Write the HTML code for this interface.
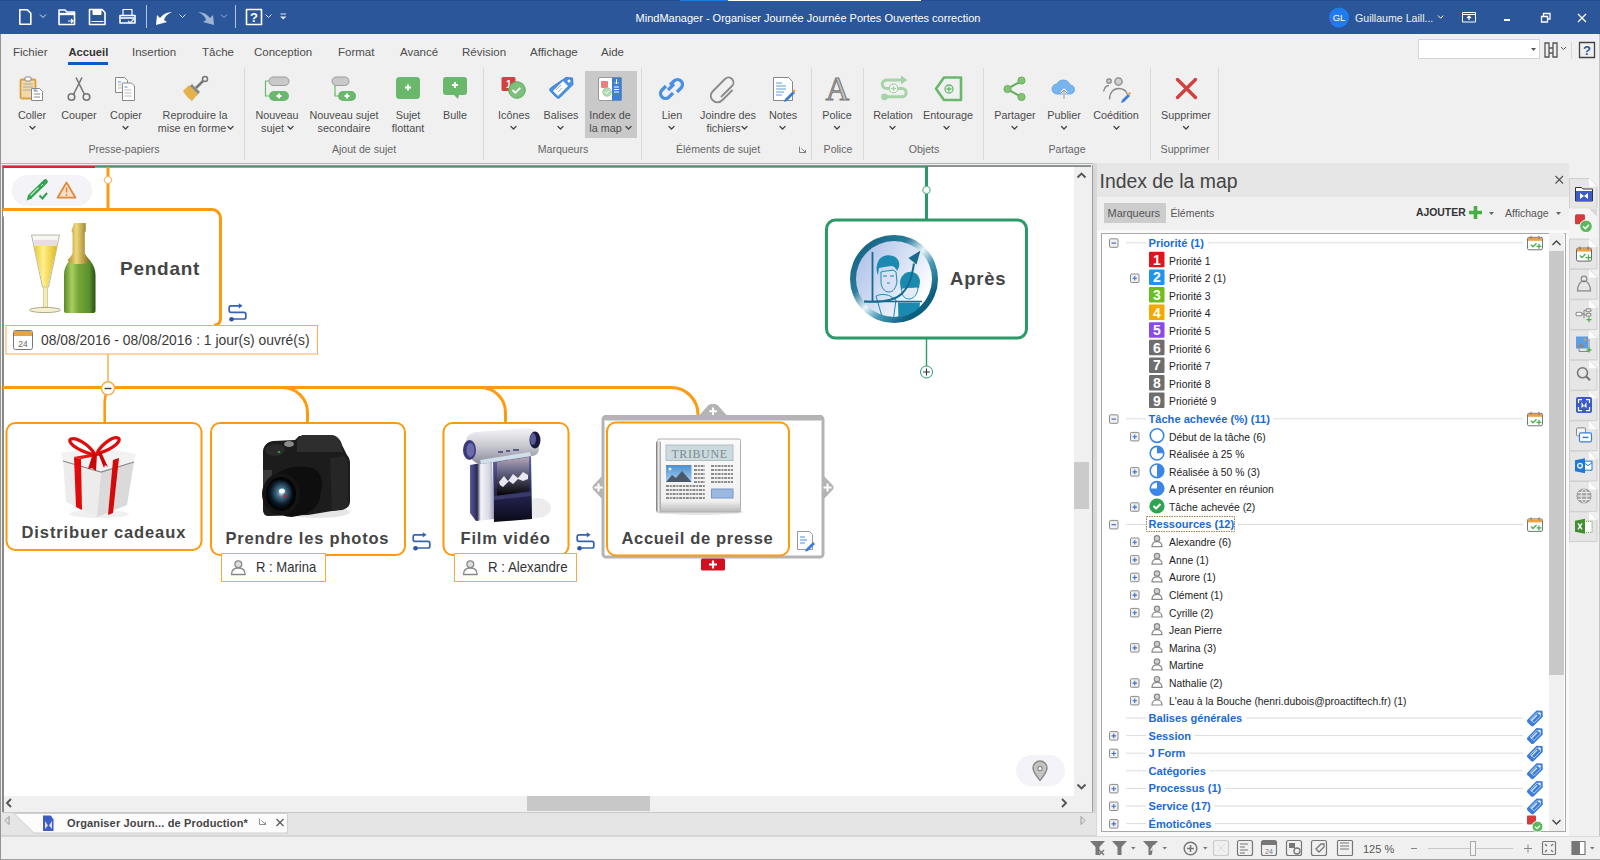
<!DOCTYPE html>
<html><head><meta charset="utf-8">
<style>
*{margin:0;padding:0;box-sizing:border-box}
html,body{width:1600px;height:860px;overflow:hidden;background:#f0f0f0;font-family:"Liberation Sans",sans-serif;position:relative}
.a{position:absolute}
svg{position:absolute;overflow:visible}
#title{left:0;top:0;width:1600px;height:34px;background:#2b579a}
#menu{left:0;top:34px;width:1600px;height:34px;background:#f0f0f0}
#ribbon{left:0;top:68px;width:1600px;height:95px;background:#f0f0f0}
.rl{position:absolute;font-size:10.8px;line-height:13.5px;color:#4c4c4c;text-align:center;white-space:nowrap}
.gl{position:absolute;font-size:10.6px;line-height:13px;color:#666;text-align:center;white-space:nowrap;top:143px}
.sep{position:absolute;top:68px;width:1px;height:92px;background:#dadada}
.mt{position:absolute;top:44.5px;font-size:11.5px;line-height:14px;color:#4c4c4c;white-space:nowrap}
#mapwrap{left:0;top:163px;width:1094px;height:650px;background:#a8a8a8}
#canvas{left:3px;top:167px;width:1071px;height:629px;background:#fff;overflow:hidden}
#vscroll{left:1074px;top:167px;width:18px;height:629px;background:#f0f0f0}
#hscroll{left:3px;top:796px;width:1089px;height:17px;background:#f0f0f0}
#tabbar{left:0;top:813px;width:1097px;height:23px;background:#e6e6e6}
#status{left:0;top:836px;width:1600px;height:24px;background:#f0f0f0}
#panel{left:1094px;top:163px;width:475px;height:673px;background:#f0f0f0}
#phead{left:1096px;top:163px;width:473px;height:34px;background:#e6e6e6}
#plist{left:1101px;top:232px;width:464px;height:599px;background:#fff;border:1px solid #a0a0a0}
#strip{left:1569px;top:163px;width:31px;height:673px;background:#f0f0f0}
</style></head><body>

<div id="title" class="a">
<div class="a" style="left:0;top:0;width:1600px;height:1px;background:#244c8a"></div><div class="a" style="left:680px;top:0;width:48px;height:1px;background:#1a7ae0"></div><div class="a" style="left:728px;top:0;width:193px;height:1px;background:#fff"></div>
<svg class="a" style="left:0;top:0" width="1600" height="34">
<g fill="none" stroke="#fff" stroke-width="1.6" stroke-linejoin="round">
 <path d="M19.8 9.8h7.5l3.5 3.5v11h-11z"/>
 <path d="M40 14.5l3 3 3-3" stroke-width="1" stroke="#dfe6f0"/>
 <path d="M59 10h6l2 2h7.5v12.5H59z"/>
 <path d="M59 14h15.5" stroke-width="2.4"/>
 <path d="M89.5 9.5h12.5l3 3v12h-15.5z"/>
 <path d="M93 10h8v4.5h-8z" fill="#fff" stroke-width="1"/>
 <path d="M91.5 21.5h12" stroke-width="1"/>
 <path d="M120 15.5h15v7.5h-15z"/>
 <path d="M123 9.5h9v6h-9z" stroke-width="1.2"/>
 <path d="M121 18h13" stroke-width="1.6"/>
 <path d="M179.5 14.5l3 3 3-3" stroke-width="1" stroke="#dfe6f0"/>
 <path d="M221 14.5l3 3 3-3" stroke-width="1" stroke="#9fb2cf"/>
 <path d="M246.5 9.5h15v15h-15z"/>
 <path d="M265.5 14.5l3 3 3-3" stroke-width="1" stroke="#dfe6f0"/>
</g>
<path d="M68 21h5M71 19l2 2-2 2M128 21l2 2 4-4" fill="none" stroke="#fff" stroke-width="1.2"/>
<path d="M146.5 5v23M235.5 5v23" stroke="#b7c5da" stroke-width="1"/>
<path d="M156 25l1-10 3 3c3-4 7-6 12-6-4 2-7 4-8 8l3 2z" fill="#fff"/>
<path d="M214 25l-1-10-3 3c-3-4-7-6-12-6 4 2 7 4 8 8l-3 2z" fill="#9fb4d4"/>
<text x="254" y="22" font-family="Liberation Sans" font-weight="bold" font-size="13" fill="#fff" text-anchor="middle">?</text>
<path d="M280.5 14h5.5" stroke="#dfe6f0" stroke-width="1"/><path d="M280 16.5h6.5l-3.25 3z" fill="#dfe6f0"/>
<circle cx="1339" cy="17.5" r="10" fill="#1f7cf0"/>
<text x="1339" y="21" font-family="Liberation Sans" font-size="9.5" fill="#fff" text-anchor="middle">GL</text>
<path d="M1438 15.5l2.7 2.7 2.7-2.7" stroke="#fff" stroke-width="1" fill="none"/>
<path d="M1462.5 12.5h13v9.5h-13zM1462.5 14.5h13" stroke="#fff" stroke-width="1" fill="none"/>
<path d="M1469 20v-4M1467 18l2-2 2 2" stroke="#fff" stroke-width="1.2" fill="none"/>
<rect x="1504" y="19" width="6" height="2" fill="#fff"/>
<path d="M1541.5 16.5h6v5.5h-6zM1543.5 16.5v-3h6.5v5.5h-2.5" stroke="#fff" stroke-width="1.3" fill="none"/>
<path d="M1578 14l8 8M1586 14l-8 8" stroke="#fff" stroke-width="1.3"/>
</svg>
<div class="a" style="left:0;top:9px;width:1600px;text-align:center;color:#fff;font-size:11px;line-height:18px;padding-left:16px">MindManager - Organiser Journée Journée Portes Ouvertes correction</div>
<div class="a" style="left:1355px;top:9px;color:#f0f0f0;font-size:10.6px;line-height:18px">Guillaume Laill...</div>
</div>

<div class="a" style="left:0;top:34px;width:1px;height:826px;background:#999"></div>
<div class="mt" style="left:13px">Fichier</div>
<div class="mt" style="left:68.5px;font-weight:bold;color:#333;font-size:11.2px">Accueil</div>
<div class="a" style="left:68px;top:62px;width:40px;height:3px;background:#0b5ac5"></div>
<div class="mt" style="left:132px">Insertion</div>
<div class="mt" style="left:202px">Tâche</div>
<div class="mt" style="left:254px">Conception</div>
<div class="mt" style="left:338px">Format</div>
<div class="mt" style="left:400px">Avancé</div>
<div class="mt" style="left:462px">Révision</div>
<div class="mt" style="left:530px">Affichage</div>
<div class="mt" style="left:601px">Aide</div>
<!-- search box -->
<div class="a" style="left:1418px;top:39px;width:122px;height:20px;background:#fff;border:1px solid #d4d4d4"></div>
<svg style="left:0;top:0" width="1600" height="163">
<path d="M1531 48h5l-2.5 3z" fill="#555"/>
<g fill="none" stroke="#555" stroke-width="1.3">
<path d="M1545 43h4v14h-4zM1553 43h4v14h-4zM1549 48h4v5h-4z"/>
<path d="M1561 47l2.5 2.5 2.5-2.5" stroke-width="1"/>
<path d="M1579.5 42.5h15v15h-15z" stroke="#444"/>
</g>
<path d="M1571.5 42v17" stroke="#d8d8d8"/>
<text x="1587" y="55" font-family="Liberation Sans" font-size="13" fill="#2b579a" text-anchor="middle" font-weight="bold">?</text>
</svg>
<!-- highlight Index de la map -->
<div class="a" style="left:585px;top:71px;width:52px;height:67px;background:#c9c9c9"></div>
<div class="sep" style="left:244px"></div>
<div class="sep" style="left:483px"></div>
<div class="sep" style="left:641px"></div>
<div class="sep" style="left:811px"></div>
<div class="sep" style="left:863px"></div>
<div class="sep" style="left:983px"></div>
<div class="sep" style="left:1150px"></div>
<div class="sep" style="left:1218px"></div>
<!-- labels -->
<div class="rl" style="left:2px;width:60px;top:108.5px">Coller</div>
<div class="rl" style="left:49px;width:60px;top:108.5px">Couper</div>
<div class="rl" style="left:96px;width:60px;top:108.5px">Copier</div>
<div class="rl" style="left:155px;width:80px;top:108.5px">Reproduire la<br>mise en forme&nbsp;&nbsp;</div>
<div class="rl" style="left:247px;width:60px;top:108.5px">Nouveau<br>sujet&nbsp;&nbsp;&nbsp;</div>
<div class="rl" style="left:304px;width:80px;top:108.5px">Nouveau sujet<br>secondaire</div>
<div class="rl" style="left:378px;width:60px;top:108.5px">Sujet<br>flottant</div>
<div class="rl" style="left:425px;width:60px;top:108.5px">Bulle</div>
<div class="rl" style="left:484px;width:60px;top:108.5px">Icônes</div>
<div class="rl" style="left:531px;width:60px;top:108.5px">Balises</div>
<div class="rl" style="left:580px;width:60px;top:108.5px">Index de<br>la map&nbsp;&nbsp;&nbsp;</div>
<div class="rl" style="left:642px;width:60px;top:108.5px">Lien</div>
<div class="rl" style="left:690px;width:76px;top:108.5px">Joindre des<br>fichiers&nbsp;&nbsp;&nbsp;</div>
<div class="rl" style="left:753px;width:60px;top:108.5px">Notes</div>
<div class="rl" style="left:807px;width:60px;top:108.5px">Police</div>
<div class="rl" style="left:863px;width:60px;top:108.5px">Relation</div>
<div class="rl" style="left:918px;width:60px;top:108.5px">Entourage</div>
<div class="rl" style="left:985px;width:60px;top:108.5px">Partager</div>
<div class="rl" style="left:1034px;width:60px;top:108.5px">Publier</div>
<div class="rl" style="left:1086px;width:60px;top:108.5px">Coédition</div>
<div class="rl" style="left:1156px;width:60px;top:108.5px">Supprimer</div>
<div class="gl" style="left:74px;width:100px">Presse-papiers</div>
<div class="gl" style="left:314px;width:100px">Ajout de sujet</div>
<div class="gl" style="left:513px;width:100px">Marqueurs</div>
<div class="gl" style="left:668px;width:100px">Éléments de sujet</div>
<div class="gl" style="left:808px;width:60px">Police</div>
<div class="gl" style="left:894px;width:60px">Objets</div>
<div class="gl" style="left:1037px;width:60px">Partage</div>
<div class="gl" style="left:1155px;width:60px">Supprimer</div>
<!-- icons -->
<svg style="left:0;top:0" width="1230" height="163">
<g fill="none" stroke="#444" stroke-width="1.25" stroke-linecap="round">
<path d="M30 126.5l2.5 2.5 2.5-2.5"/><path d="M123 126.5l2.5 2.5 2.5-2.5"/>
<path d="M228 126.5l2.5 2.5 2.5-2.5"/>
<path d="M288 126.5l2.5 2.5 2.5-2.5"/>
<path d="M511 126.5l2.5 2.5 2.5-2.5"/><path d="M558 126.5l2.5 2.5 2.5-2.5"/>
<path d="M626 126.5l2.5 2.5 2.5-2.5"/>
<path d="M669 126.5l2.5 2.5 2.5-2.5"/><path d="M742 126.5l2.5 2.5 2.5-2.5"/><path d="M780 126.5l2.5 2.5 2.5-2.5"/>
<path d="M834.5 126.5l2.5 2.5 2.5-2.5"/><path d="M890 126.5l2.5 2.5 2.5-2.5"/><path d="M944 126.5l2.5 2.5 2.5-2.5"/>
<path d="M1012 126.5l2.5 2.5 2.5-2.5"/><path d="M1061.5 126.5l2.5 2.5 2.5-2.5"/><path d="M1114 126.5l2.5 2.5 2.5-2.5"/>
<path d="M1183.5 126.5l2.5 2.5 2.5-2.5"/>
</g>
<!-- Coller -->
<rect x="20.5" y="79.5" width="15" height="19" rx="1.5" fill="#f2d9a6" stroke="#d9a041" stroke-width="1.8"/>
<rect x="25" y="77" width="6" height="4" rx="1" fill="#fff" stroke="#888"/>
<path d="M23 84h10M23 87h10M23 90h8" stroke="#aaa"/>
<path d="M31.5 88.5h8l3 3v9h-11z" fill="#fff" stroke="#888"/>
<path d="M34 91h4M34 94h6M34 97h6" stroke="#888"/>
<path d="M33.5 90h3" stroke="#4a8ee0"/>
<!-- Couper -->
<g fill="none" stroke="#777" stroke-width="1.6">
<circle cx="71.5" cy="97" r="3.3"/><circle cx="86.5" cy="97" r="3.3"/>
<path d="M73.5 94.5L82 77.5M84.5 94.5L76 77.5"/>
</g>
<!-- Copier -->
<path d="M115.5 77.5h9l3 3v12h-12z" fill="#fafafa" stroke="#888"/>
<path d="M122.5 83h9l3 3v14.5h-12z" fill="#fff" stroke="#888"/>
<path d="M118 82h3M124.5 87h3" stroke="#4a8ee0"/>
<path d="M118 85h5M118 88h5M124.5 90h7M124.5 93h7M124.5 96h7" stroke="#bbb"/>
<!-- brush -->
<path d="M196 88l7-7" stroke="#777" stroke-width="2.5"/>
<circle cx="205" cy="79" r="2.5" fill="none" stroke="#777" stroke-width="1.5"/>
<path d="M192 84l8 8-3 3-8-8z" fill="#888"/>
<path d="M183 91l6-6 9 9-6 7c-2-1-7-6-9-10z" fill="#e3b24a"/>
<!-- Nouveau sujet -->
<path d="M269 81h-3.5v15h3.5" fill="none" stroke="#6ab86b" stroke-width="1.2"/>
<rect x="269" y="77" width="20" height="8.5" rx="4.2" fill="#c9c9c9" stroke="#9c9c9c"/>
<rect x="269" y="91" width="20" height="10" rx="5" fill="#6ab86b"/>
<path d="M279 93.5v5M276.5 96h5" stroke="#fff" stroke-width="1.8"/>
<!-- Nouveau sujet secondaire -->
<path d="M335 85v11h3" fill="none" stroke="#6ab86b" stroke-width="1.2"/>
<rect x="332" y="77" width="17" height="8.5" rx="4.2" fill="#c9c9c9" stroke="#9c9c9c"/>
<rect x="338" y="91" width="18" height="10" rx="5" fill="#6ab86b"/>
<path d="M347 93.5v5M344.5 96h5" stroke="#fff" stroke-width="1.8"/>
<!-- Sujet flottant -->
<rect x="396" y="77" width="24" height="22" rx="3.5" fill="#6ab86b"/>
<path d="M408 84.5v6M405 87.5h6" stroke="#fff" stroke-width="2"/>
<!-- Bulle -->
<path d="M446 77h18a3 3 0 0 1 3 3v12a3 3 0 0 1-3 3h-5l-1 4-4-4h-8a3 3 0 0 1-3-3v-12a3 3 0 0 1 3-3z" fill="#6ab86b"/>
<path d="M455 82v6M452 85h6" stroke="#fff" stroke-width="2"/>
<!-- Icones -->
<rect x="501.5" y="77" width="14" height="14" rx="1.5" fill="#d44040"/>
<text x="506" y="88" font-family="Liberation Sans" font-weight="bold" font-size="10" fill="#fff">1</text>
<circle cx="517" cy="90" r="8.3" fill="#7cc07c" stroke="#5aaa5a" stroke-width="1"/>
<path d="M512.5 90l2.8 2.8 5-5" fill="none" stroke="#fff" stroke-width="1.8"/>
<!-- Balises -->
<path d="M566 77.5l6.5 0.5 0.5 6.5-13 13c-1 1-2.5 1-3.5 0l-6-6c-1-1-1-2.5 0-3.5z" fill="#4a90e2" stroke="#3b7dd8"/>
<path d="M553 91l10-10 5 5-10 10z" fill="#fff"/>
<circle cx="569" cy="81" r="1.5" fill="#fff"/>
<path d="M556 90l5-5M558 92l4-4" stroke="#999" stroke-width=".8"/>
<!-- Index de la map -->
<rect x="598.5" y="77.5" width="23" height="23" rx="1.5" fill="#fff" stroke="#999"/>
<rect x="612" y="77.5" width="9.5" height="23" fill="#3d7fd4"/>
<rect x="601" y="81" width="7" height="7" rx="1" fill="#e88080"/>
<circle cx="607" cy="92" r="4.3" fill="#b4dcb4" stroke="#9ccc9c" stroke-width=".8"/><path d="M605 92l1.5 1.5 2.5-2.5" fill="none" stroke="#fff" stroke-width="1"/>
<path d="M616.5 79v5M614.5 82l2 2 2-2M614 87h5M614 89.5h5M614 92h5" stroke="#fff" stroke-width="1"/>
<!-- Lien -->
<g fill="none" stroke="#4a90e2" stroke-width="3.2">
<path d="M670 85l4-4c2-2 5-2 7 0s2 5 0 7l-4 4"/>
<path d="M673 93l-4 4c-2 2-5 2-7 0s-2-5 0-7l4-4"/>
<path d="M668 90l6-6"/>
</g>
<!-- Joindre -->
<path d="M721 97l11-11c2-2 2-5 0-7s-5-2-7 0l-12 12c-3 3-3 7 0 9.5s6.5 2.5 9.5-.5l10-10" fill="none" stroke="#8a8a8a" stroke-width="1.8"/>
<!-- Notes -->
<path d="M773.5 77.5h15l4 4v19h-19z" fill="#fff" stroke="#888"/>
<path d="M776 83h6M776 86h10M776 89h10M776 92h8M776 95h6" stroke="#4a8ee0" stroke-width=".9"/>
<path d="M785 99l8-8 2 2-8 8-3 1z" fill="#3b7dd8"/>
<circle cx="794" cy="91" r="1.3" fill="#f0a030"/>
<!-- Police -->
<text x="837.5" y="100" font-family="Liberation Serif" font-size="33" fill="#c4c4c4" text-anchor="middle" stroke="#777" stroke-width="1">A</text>
<!-- Relation -->
<path d="M903 80H886.5a4.2 4.2 0 0 0 0 8.4H902a4.2 4.2 0 0 1 0 8.4H886" fill="none" stroke="#a6d4a6" stroke-width="3"/>
<path d="M901 75.5l6.5 4.5-6.5 4.5z" fill="#a6d4a6"/>
<circle cx="884.5" cy="96.8" r="3.4" fill="#a6d4a6"/>
<circle cx="893.5" cy="88.4" r="4.2" fill="#fff" stroke="#a6d4a6" stroke-width="1.3"/>
<path d="M893.5 85.8v5.2M890.9 88.4h5.2" stroke="#a6d4a6" stroke-width="1.5"/>
<!-- Entourage -->
<path d="M944 77.5h17v22.5h-17l-8-11.25z" fill="none" stroke="#6ab86b" stroke-width="2.6" stroke-linejoin="round"/>
<circle cx="949" cy="89" r="4" fill="none" stroke="#6ab86b" stroke-width="1.3"/>
<path d="M949 86.5v5M946.5 89h5" stroke="#6ab86b" stroke-width="1.3"/>
<!-- Partager -->
<path d="M1021.5 81l-14.5 8 14.5 8" fill="none" stroke="#62ac5a" stroke-width="2"/>
<g fill="#82c472" stroke="#6ab05e" stroke-width="1"><circle cx="1021.5" cy="80.5" r="3.6"/><circle cx="1007.5" cy="89" r="3.6"/><circle cx="1021.5" cy="97" r="3.6"/></g>
<!-- Publier -->
<path d="M1057 94a5 5 0 0 1 0-10 7 7 0 0 1 13 1 4.5 4.5 0 0 1 0 9z" fill="#78b4ec" stroke="#5a9ee0" stroke-width=".8"/>
<path d="M1064 99v-9M1061 93l3-3 3 3" fill="none" stroke="#fff" stroke-width="2.4"/>
<path d="M1064 99v-9M1061 93l3-3 3 3" fill="none" stroke="#888" stroke-width="1"/>
<!-- Coedition -->
<g fill="none" stroke="#888" stroke-width="1.3">
<circle cx="1118.5" cy="81.5" r="3.6" fill="#d0d0d0"/><path d="M1109.5 99.5c0-7 4-11 9-11s8 3 9 6"/>
<circle cx="1109" cy="81" r="2.2" fill="#d0d0d0"/><path d="M1103.5 91.5c1-4 3-6 5.5-6"/>
</g>
<path d="M1122 100l6-6 2 2-6 6-3 1z" fill="#3b7dd8"/><circle cx="1129.5" cy="93.5" r="1.2" fill="#f0a030"/>
<!-- Supprimer -->
<path d="M1177.5 79.5l18 18M1195.5 79.5l-18 18" stroke="#d24040" stroke-width="3.4" stroke-linecap="round"/>
<!-- dialog launcher -->
<path d="M799.5 146.5v6h6M801.5 148.5l4 4M803 152.5h2.5v-2.5" fill="none" stroke="#777" stroke-width=".9"/>
</svg>

<div class="a" style="left:0;top:163px;width:1094px;height:650px;background:#f0f0f0"></div>
<div class="a" style="left:0;top:163px;width:1094px;height:1px;background:#b4b4b4"></div>
<div class="a" style="left:2px;top:165px;width:1090px;height:1px;background:#8e9a9a"></div>
<div class="a" style="left:2px;top:165px;width:1.5px;height:647px;background:#8a8a8a"></div>
<div class="a" style="left:1090.5px;top:165px;width:1px;height:648px;background:#f4f4f4"></div><div class="a" style="left:1091.5px;top:165px;width:1.2px;height:648px;background:#9a9a9a"></div><div class="a" style="left:2px;top:812px;width:1091px;height:1px;background:#c8c8c8"></div>
<div class="a" style="left:3px;top:165.5px;width:1088px;height:1.8px;background:#8c8c8c"></div>
<div class="a" style="left:3.5px;top:167.3px;width:1070px;height:628.7px;background:#fff"></div>
<svg style="left:3px;top:166px;overflow:hidden" width="1071" height="630" viewBox="3 166 1071 630">
<defs>
 <linearGradient id="glass" x1="0" x2="1"><stop offset="0" stop-color="#e8c838"/><stop offset=".4" stop-color="#fff08a"/><stop offset="1" stop-color="#e0b820"/></linearGradient>
 <linearGradient id="bottle" x1="0" x2="1"><stop offset="0" stop-color="#5a8a28"/><stop offset=".25" stop-color="#a8d060"/><stop offset=".45" stop-color="#78a838"/><stop offset=".8" stop-color="#5a9030"/><stop offset="1" stop-color="#2a5010"/></linearGradient>
 <linearGradient id="foil" x1="0" x2="1"><stop offset="0" stop-color="#a88a30"/><stop offset=".4" stop-color="#f0d878"/><stop offset="1" stop-color="#8a6a20"/></linearGradient>
 <radialGradient id="lens" cx=".55" cy=".45" r=".6"><stop offset="0" stop-color="#d8e8f0"/><stop offset=".25" stop-color="#4a7890"/><stop offset=".7" stop-color="#0a1a28"/><stop offset="1" stop-color="#000"/></radialGradient>
 <linearGradient id="cam" x1="0" x2="1" y1="0" y2="1"><stop offset="0" stop-color="#3a3a3a"/><stop offset="1" stop-color="#0a0a0a"/></linearGradient>
 <linearGradient id="silver" x1="0" x2="0" y1="0" y2="1"><stop offset="0" stop-color="#f4f4f8"/><stop offset=".5" stop-color="#c8c8d0"/><stop offset="1" stop-color="#8a8a9a"/></linearGradient>
 <linearGradient id="paper" x1="0" x2="0" y1="0" y2="1"><stop offset="0" stop-color="#fafafa"/><stop offset=".85" stop-color="#f0f0f0"/><stop offset="1" stop-color="#b8b8b8"/></linearGradient>
 <linearGradient id="apres" x1="0" x2="1" y1="0" y2=".6"><stop offset="0" stop-color="#a8bce6"/><stop offset=".55" stop-color="#d4dff4"/><stop offset="1" stop-color="#ffffff"/></linearGradient>
 <linearGradient id="ring" x1="0" x2="1" y1="0" y2="1"><stop offset="0" stop-color="#0a5878"/><stop offset=".35" stop-color="#2a7a9a"/><stop offset=".5" stop-color="#e8f4f8"/><stop offset=".62" stop-color="#4a9ab8"/><stop offset=".8" stop-color="#0e6080"/><stop offset="1" stop-color="#0a5070"/></linearGradient>
</defs>
<!-- top lines -->
<rect x="3" y="166" width="92" height="2" fill="#e0262a"/>
<rect x="95" y="166.2" width="831" height="1.6" fill="#2b9a66" opacity=".85"/>
<!-- badge -->
<rect x="12" y="175" width="80" height="31" rx="15.5" fill="#f3f3f8"/>
<path d="M30 196.5L45.5 181.5" stroke="#2ea44f" stroke-width="4.6" stroke-linecap="round"/>
<path d="M26.5 200.5l2-5.5 3.5 3.5z" fill="#2ea44f"/>
<path d="M30.5 195.5l8-8" stroke="#c8ecc8" stroke-width="1.1"/>
<path d="M41 186l2-2" stroke="#c8ecc8" stroke-width="1"/>
<path d="M39.5 195.5l3 3 4.5-5.5" fill="none" stroke="#2ea44f" stroke-width="2"/>
<path d="M66.5 182.5l9 15.2h-18z" fill="#f8e0c8" stroke="#e08a3c" stroke-width="1.8" stroke-linejoin="round"/>
<path d="M66.5 187.5v5" stroke="#e08a3c" stroke-width="1.6"/><circle cx="66.5" cy="195" r=".9" fill="#e08a3c"/>
<!-- Pendant connector -->
<rect x="106.5" y="167" width="3" height="42" fill="#fd9a0e"/>
<circle cx="108" cy="180" r="3.6" fill="#fff" stroke="#fdbb6a" stroke-width="1.3"/>
<!-- Pendant box -->
<path d="M-10 209.5H212a8.5 8.5 0 0 1 8.5 8.5V319a6.5 6.5 0 0 1-6.5 6.5" fill="#fff" stroke="#fd9a0e" stroke-width="3"/>
<!-- champagne glass -->
<path d="M31.5 235h28l-11 52h-6z" fill="#f6f6f2" stroke="#b8b8a8" stroke-width="1"/>
<path d="M34 246h23l-9.5 42h-4z" fill="url(#glass)"/>
<path d="M33.5 240h24l-1 6h-22z" fill="#e8e0d8"/>
<rect x="43.5" y="287" width="4" height="21" fill="#f4ecb0" stroke="#c8c090" stroke-width=".7"/>
<ellipse cx="45" cy="310" rx="15.5" ry="2.6" fill="#f4f0d0" stroke="#a8a080" stroke-width=".9"/>
<!-- bottle -->
<path d="M74 223h11.5v8l-1 2v20c2 5 11 10 11 22v36c0 1-1 2-2 2H66c-1 0-2-1-2-2v-36c0-12 9-17 11-22v-20l-1-2z" fill="url(#bottle)"/>
<path d="M74 223h11.5v8l-1 2v20c1 3 3 5 5 7l-3 3c-2 1-4 1-8 1s-6 0-8-1l-3-3c2-2 4-4 5-7v-20l-1-2z" fill="url(#foil)"/>
<!-- Pendant text -->
<text x="120" y="274.6" font-family="Liberation Sans" font-weight="bold" font-size="19" letter-spacing=".75" fill="#454545">Pendant</text>
<g transform="translate(0,0)"><path d="M240 305.8H231q-1.8 0-1.8 1.8v3q0 1.8 1.8 1.8h13q1.8 0 1.8 1.8v3q0 1.8-1.8 1.8H232" fill="none" stroke="#3462b4" stroke-width="1.7"/><path d="M238.8 303.2l3.8 2.6-3.8 2.6z" fill="#3462b4"/><circle cx="231.5" cy="319.2" r="2.3" fill="#2a56a8"/></g>
<!-- date callout -->
<rect x="6" y="325.5" width="311.5" height="28.5" fill="#fff" stroke="#f9ac50" stroke-width="1"/>
<rect x="13.5" y="330.5" width="19" height="19" rx="2" fill="#fff" stroke="#777" stroke-width="1"/>
<rect x="14" y="331" width="18" height="5" fill="#f0a040"/>
<text x="23" y="347" font-family="Liberation Sans" font-size="8.5" fill="#666" text-anchor="middle">24</text>
<text transform="translate(41,345.4) scale(.958,1)" font-family="Liberation Sans" font-size="14.5" fill="#3a3a3a">08/08/2016 - 08/08/2016 : 1 jour(s) ouvré(s)</text>
<!-- connectors -->
<rect x="107.2" y="354" width="1.6" height="30" fill="#fdb45a"/>
<path d="M3 387.5H282.5a25 25 0 0 1 25 25v10" fill="none" stroke="#fd9a0e" stroke-width="3"/>
<path d="M282 387.5H480.5a25 25 0 0 1 25 25v10" fill="none" stroke="#fd9a0e" stroke-width="3"/>
<path d="M480 387.5H671a27 27 0 0 1 27 27v1" fill="none" stroke="#fd9a0e" stroke-width="3"/>
<path d="M107 392c-1.5 3-2.3 6-2.3 10v21" fill="none" stroke="#fd9a0e" stroke-width="2.6"/>
<circle cx="108" cy="388.3" r="6.6" fill="#fff" stroke="#f9a846" stroke-width="1.4"/>
<path d="M104.5 388.5h7" stroke="#444" stroke-width="1.4"/>
<!-- Distribuer box -->
<rect x="6.5" y="423" width="195" height="127" rx="9" fill="#fff" stroke="#fd9a0e" stroke-width="2"/>
<!-- gift -->
<ellipse cx="99" cy="514" rx="30" ry="4" fill="#f0f0f0"/>
<path d="M61 453l38-6 37 7-2 8-34 11-37-11z" fill="#f2f2f2"/>
<path d="M63 461l38 11-4 45-31-15z" fill="#ececec"/>
<path d="M101 472l33-10-7 43-30 12z" fill="#dadada"/>
<path d="M63 461l38 11 33-10" fill="none" stroke="#8a8a8a" stroke-width="1.3"/>
<path d="M74 457l7 2 1 51-6-3z" fill="#e00c0c"/>
<path d="M113 460l6-2-6 55-5 2z" fill="#d40a0a"/>
<path d="M74 457l22-4 6 2-21 4z" fill="#e81818"/>
<path d="M94 453c-6-9-18-16-23-14-4 2 2 10 23 16z" fill="#fff" stroke="#e00c0c" stroke-width="3.2" stroke-linejoin="round"/>
<path d="M97 453c5-9 16-17 21-15 4 2-2 10-21 16z" fill="#fff" stroke="#e00c0c" stroke-width="3.2" stroke-linejoin="round"/>
<path d="M93 453l-5 16 4-1 4 3 1-17zM98 453l6 15 1-3 3 2-7-15z" fill="#c80808"/>
<!-- Distribuer text -->
<text x="21.5" y="538.4" font-family="Liberation Sans" font-weight="bold" font-size="16.5" letter-spacing=".9" fill="#454545">Distribuer cadeaux</text>
<!-- Prendre box -->
<rect x="211" y="423" width="194" height="132" rx="9" fill="#fff" stroke="#fd9a0e" stroke-width="2"/>
<!-- camera -->
<ellipse cx="318" cy="512" rx="32" ry="6" fill="#e6e6e6"/>
<path d="M263 452c0-6 4-10 10-11l22-1 4-4h34c4 0 8 4 9 9l5 10c2 2 3 5 3 8v38c0 4-2 7-6 8l-36 6-40 1c-3 0-5-3-5-6z" fill="#1c1c1c"/>
<path d="M297 440l5-5h30c4 0 8 4 9 9l2 8h-46z" fill="#2e2e2e"/>
<path d="M263 470h9v30h-9z" fill="#3a3a3a"/>
<path d="M330 458l14-2c2 2 4 5 4 8v38c0 4-2 7-6 8l-10 1z" fill="#262626"/>
<ellipse cx="275" cy="450" rx="10" ry="6" fill="#2a2a2a"/>
<circle cx="279" cy="452" r="1.3" fill="#3a8a3a"/>
<ellipse cx="289" cy="444" rx="5" ry="3" fill="#8a8a8a"/>
<path d="M272 478c8-10 26-14 40-10 6 2 10 8 10 16l-2 14c-2 8-8 14-18 17l-10 2c-12 0-20-8-20-22z" fill="#0e0e0e"/>
<ellipse cx="281" cy="494" rx="19" ry="21" fill="#141414"/>
<ellipse cx="281" cy="494" rx="15" ry="17" fill="#050505"/>
<ellipse cx="280" cy="494" rx="12.5" ry="14" fill="url(#lens)"/>
<ellipse cx="282" cy="491" rx="3" ry="2.5" fill="#fff" opacity=".9"/>
<circle cx="285" cy="496" r="1.6" fill="#c02020"/>
<text x="225.5" y="543.8" font-family="Liberation Sans" font-weight="bold" font-size="16.5" letter-spacing=".8" fill="#454545">Prendre les photos</text>
<g transform="translate(184,229)"><path d="M240 305.8H231q-1.8 0-1.8 1.8v3q0 1.8 1.8 1.8h13q1.8 0 1.8 1.8v3q0 1.8-1.8 1.8H232" fill="none" stroke="#3462b4" stroke-width="1.7"/><path d="M238.8 303.2l3.8 2.6-3.8 2.6z" fill="#3462b4"/><circle cx="231.5" cy="319.2" r="2.3" fill="#2a56a8"/></g>
<!-- Marina callout -->
<rect x="221.5" y="553.5" width="104" height="28" fill="#fff" stroke="#f9a846" stroke-width="1"/>
<g fill="#ddd" stroke="#888" stroke-width="1.3"><circle cx="238.3" cy="564.3" r="3.4"/><path d="M231.5 574.5c0-4.5 3-6.5 6.8-6.5s6.8 2 6.8 6.5z" fill="none"/></g>
<text transform="translate(256,571.8) scale(.92,1)" font-family="Liberation Sans" font-size="14.2" fill="#333">R : Marina</text>
<!-- Film video box -->
<rect x="443.5" y="423" width="125" height="132" rx="9" fill="#fff" stroke="#fd9a0e" stroke-width="2"/>
<!-- video camera -->
<defs>
<linearGradient id="vbody" x1="0" x2="0" y1="0" y2="1"><stop offset="0" stop-color="#6a6aa8"/><stop offset=".5" stop-color="#2a2a5a"/><stop offset="1" stop-color="#0a0a1a"/></linearGradient>
<linearGradient id="vgrip" x1="0" x2="1"><stop offset="0" stop-color="#5a5aa0"/><stop offset=".3" stop-color="#2a2a50"/><stop offset=".45" stop-color="#f4f4f8"/><stop offset=".8" stop-color="#d8d8e4"/><stop offset="1" stop-color="#9a9ab8"/></linearGradient>
<linearGradient id="vscr" x1="0" x2="0" y1="0" y2="1"><stop offset="0" stop-color="#b8a8b8"/><stop offset=".35" stop-color="#6a6a8a"/><stop offset="1" stop-color="#000"/></linearGradient>
</defs>
<ellipse cx="537" cy="508" rx="14" ry="10" fill="#ececec"/>
<path d="M470 465l22-4 2 58-18 2-6-8z" fill="url(#vgrip)"/>
<path d="M493 461l38-6 1 64-38 3z" fill="url(#vbody)"/>
<path d="M497 462l32-5 0 34-32 5z" fill="url(#vscr)"/>
<path d="M499 482l5-6 4 5 5-7 5 4 5-6 5 3v4l-5 2-5-2-5 5-4-3-6 6-3-2z" fill="#e8e8f0"/>
<path d="M494 496l37-4v4l-37 4z" fill="#3a3a6a"/>
<path d="M466 444c0-8 3-11 10-12l52-4c6 0 9 3 10 9l1 12c0 4-3 7-7 7l-50 8c-7 1-16-8-16-20z" fill="url(#silver)"/>
<path d="M480 460l50-8 1 4-50 8z" fill="#cfe0ea"/>
<path d="M498 452h5M506 451h4M513 450h6" stroke="#5a5a8a" stroke-width="1.8"/>
<ellipse cx="469.5" cy="450" rx="6.5" ry="10" fill="#3a3a7a"/>
<ellipse cx="470.5" cy="450" rx="4" ry="7" fill="#6a6aaa"/>
<ellipse cx="535" cy="440" rx="5.5" ry="8.5" fill="#1a1a3a"/>
<ellipse cx="533" cy="439" rx="3" ry="6" fill="#5a5a9a"/>
<text x="460.5" y="543.8" font-family="Liberation Sans" font-weight="bold" font-size="16.5" letter-spacing=".85" fill="#454545">Film vidéo</text>
<g transform="translate(348,229)"><path d="M240 305.8H231q-1.8 0-1.8 1.8v3q0 1.8 1.8 1.8h13q1.8 0 1.8 1.8v3q0 1.8-1.8 1.8H232" fill="none" stroke="#3462b4" stroke-width="1.7"/><path d="M238.8 303.2l3.8 2.6-3.8 2.6z" fill="#3462b4"/><circle cx="231.5" cy="319.2" r="2.3" fill="#2a56a8"/></g>
<!-- Alexandre callout -->
<rect x="454.5" y="553.5" width="122" height="28" fill="#fff" stroke="#f9a846" stroke-width="1"/>
<g fill="#ddd" stroke="#888" stroke-width="1.3"><circle cx="470.3" cy="564.3" r="3.4"/><path d="M463.5 574.5c0-4.5 3-6.5 6.8-6.5s6.8 2 6.8 6.5z" fill="none"/></g>
<text transform="translate(488,571.8) scale(.935,1)" font-family="Liberation Sans" font-size="14.2" fill="#333">R : Alexandre</text>
<!-- selection frame -->
<path d="M606 416.5h214a3 3 0 0 1 3 3v134.5a3 3 0 0 1-3 3h-214a3 3 0 0 1-3-3v-134.5a3 3 0 0 1 3-3z" fill="none" stroke="#b4b4b4" stroke-width="3"/>
<rect x="603" y="415" width="220" height="5.5" rx="3" fill="#b4b4b4"/>
<path d="M699 415.5l9.5-10.5c1.5-1.5 7.5-1.5 9 0l9.5 10.5z" fill="#b4b4b4"/>
<path d="M713 407.5v7.5M709.2 411.2h7.6" stroke="#fff" stroke-width="2"/>
<path d="M604 474l-10.5 11c-1.5 1.5-1.5 3.5 0 5l10.5 11z" fill="#b4b4b4"/><path d="M594.5 487.5h8M598.5 483.5v8" stroke="#fff" stroke-width="2"/>
<path d="M822 474l10.5 11c1.5 1.5 1.5 3.5 0 5l-10.5 11z" fill="#b4b4b4"/><path d="M823.5 487.5h8M827.5 483.5v8" stroke="#fff" stroke-width="2"/>
<rect x="701" y="558.5" width="24" height="12" rx="1.5" fill="#d0101e"/>
<path d="M713 560.5v8M709 564.5h8" stroke="#fff" stroke-width="2.2"/>
<!-- Accueil box -->
<rect x="607" y="422.5" width="182" height="133" rx="9" fill="#fff" stroke="#fd9a0e" stroke-width="2"/>
<!-- newspaper -->
<defs><linearGradient id="roll" x1="0" x2="1"><stop offset="0" stop-color="#707070"/><stop offset=".5" stop-color="#e8e8e8"/><stop offset="1" stop-color="#a0a0a0"/></linearGradient>
<linearGradient id="sky" x1="0" x2="0" y1="0" y2="1"><stop offset="0" stop-color="#4a90d0"/><stop offset="1" stop-color="#a8d0f0"/></linearGradient></defs>
<ellipse cx="699" cy="512" rx="44" ry="3" fill="#e4e4e4"/>
<rect x="657.5" y="439" width="83" height="73" rx="1.5" fill="url(#paper)" stroke="#b0b0b0" stroke-width="1"/>
<rect x="656" y="441" width="5" height="71" rx="2" fill="url(#roll)"/>
<rect x="666" y="445" width="67" height="15.5" fill="#ccdade" stroke="#b0c0c4" stroke-width="1"/>
<text x="699.5" y="457.5" font-family="Liberation Serif" font-size="12" fill="#7a8a90" text-anchor="middle" letter-spacing=".6">TRIBUNE</text>
<rect x="666" y="465" width="25.5" height="17" fill="url(#sky)"/>
<path d="M666 482l6-7 4 3 6-7 9.5 11z" fill="#4a5a6a"/>
<circle cx="670" cy="469" r="1.5" fill="#e8f4ff"/>
<g stroke="#6a6a6a" stroke-width="1.3" stroke-dasharray="3 .8 2 .8">
<path d="M694 466h11M694 470h11M694 474h11M694 478h11M694 482h11M711 466h22M711 470h22M711 474h22M711 478h22M711 482h22M666 486h39M666 490h39M666 494h39M666 498h39"/>
</g>
<rect x="711.5" y="489" width="21.5" height="9" fill="#9ab8e0" stroke="#7a98c8" stroke-width="1"/>
<text x="621.5" y="543.6" font-family="Liberation Sans" font-weight="bold" font-size="16.5" letter-spacing=".68" fill="#454545">Accueil de presse</text>
<!-- notes icon -->
<path d="M797.5 531.5h12l3 3v15h-15z" fill="#fff" stroke="#999" stroke-width="1"/>
<path d="M800 537h5M800 540h7M800 543h5" stroke="#4a8ee0" stroke-width="1"/>
<path d="M806 549l7-7 2 2-7 7-3 .5z" fill="#3b7dd8"/>
<!-- Apres -->
<rect x="925" y="166" width="3" height="53" fill="#2b9a66"/>
<circle cx="926.5" cy="190" r="3.6" fill="#fff" stroke="#6cbb94" stroke-width="1.3"/>
<rect x="826.5" y="220" width="200" height="118" rx="9" fill="#fff" stroke="#2b9a66" stroke-width="3"/>
<circle cx="894" cy="279" r="44" fill="url(#ring)"/>
<circle cx="894" cy="279" r="38" fill="url(#apres)"/>
<clipPath id="apclip"><circle cx="894" cy="279" r="38.5"/></clipPath>
<g clip-path="url(#apclip)"><g fill="#1a8ab0">
<path d="M878 262c2-6 9-8 15-6 5 2 7 6 6 11l-2 4c-1-3-3-5-6-5-4 1-9 1-12 2l-1 7c-2-4-2-9 0-13z"/>
<path d="M881 272c3-1 8-1 12-2l3 2 1 10c-1 6-4 10-8 10-5 0-8-5-8-11z" fill="#d8e2f4" stroke="#1a8ab0" stroke-width="1"/>
<path d="M883 276h4M890 276h4M887 283h3" stroke="#1a8ab0" stroke-width="1.2"/>
<path d="M900 283c0-7 6-12 12-11 5 1 8 5 8 10l-1 6-18 2z"/>
<path d="M902 288l16-1c0 5-3 12-9 12s-8-6-7-11z" fill="#e4eaf8" stroke="#1a8ab0" stroke-width=".9"/>
<path d="M898 302.5h22l-1.5 15c-6 4-13 5-20 3z"/>
<path d="M876 296c4-2 10-2 14 0l6 4-3 22-10-2z" fill="none" stroke="#1a8ab0" stroke-width="1"/>
</g>
<path d="M872.5 252v49" stroke="#1a6a8e" stroke-width="1.8"/>
<path d="M864 301.5c16 1 30 0 38-8s10-18 12-30" fill="none" stroke="#1a6a8e" stroke-width="2"/>
<path d="M864 301.5h58" stroke="#1a6a8e" stroke-width="1.6"/>
<path d="M920.5 250.5l-12 7.5 8 6.5z" fill="#1a6a8e"/></g>
<text x="950" y="284.5" font-family="Liberation Sans" font-weight="bold" font-size="18.5" letter-spacing=".8" fill="#454545">Après</text>
<rect x="925.8" y="339" width="1.4" height="27" fill="#2b9a66"/>
<circle cx="926.5" cy="372" r="6" fill="#fff" stroke="#2b9a66" stroke-width="1"/>
<path d="M923 372h7M926.5 368.5v7" stroke="#333" stroke-width="1.1"/>
<!-- location pin pill -->
<rect x="1016" y="755" width="49" height="31" rx="15.5" fill="#f3f3f8"/>
<path d="M1040 780.5c-4-5-7-8.5-7-12.5a7 7 0 0 1 14 0c0 4-3 7.5-7 12.5z" fill="#c4c4c4" stroke="#888" stroke-width="1.4"/>
<circle cx="1040" cy="768.5" r="2.2" fill="#fff" stroke="#888" stroke-width="1.2"/>
</svg>
<!-- vertical scrollbar -->
<div class="a" style="left:1073.5px;top:168px;width:17px;height:628px;background:#f0f0f0"></div>
<div class="a" style="left:1073.5px;top:462px;width:15.5px;height:47px;background:#cbcbcb"></div>
<svg style="left:0;top:0" width="1600" height="860">
<path d="M1077.5 177.5l4-4 4 4M1077.5 784.5l4 4 4-4M11 799l-4 4 4 4M1062 799l4 4-4 4" fill="none" stroke="#555" stroke-width="1.9"/>
</svg>
<div class="a" style="left:527px;top:796px;width:123px;height:15px;background:#c8c8c8"></div>

<div class="a" style="left:1093px;top:163px;width:4px;height:673px;background:#d8d8d8"></div>
<div class="a" style="left:1097px;top:163px;width:472px;height:33.5px;background:#e6e6e6"></div>
<div class="a" style="left:1097px;top:196.5px;width:472px;height:33px;background:#f0f0f0"></div>
<div class="a" style="left:1097px;top:229.5px;width:472px;height:606.5px;background:#f9f9f9"></div>
<svg style="left:0;top:0" width="1600" height="200"><text transform="translate(1099.5,188) scale(.96,1)" font-family="Liberation Sans" font-size="20.2" fill="#444">Index de la map</text></svg>
<div class="a" style="left:1104px;top:203px;width:61.5px;height:19.5px;background:#cccccc"></div>
<div class="a" style="left:1107.5px;top:205.5px;font-size:11px;line-height:14px;color:#555">Marqueurs</div>
<div class="a" style="left:1170.5px;top:205.5px;font-size:10.5px;line-height:14px;color:#555">Éléments</div>
<div class="a" style="left:1416px;top:205.5px;font-size:10.4px;line-height:14px;color:#333;font-weight:bold">AJOUTER</div>
<div class="a" style="left:1505px;top:205.5px;font-size:10.5px;line-height:14px;color:#555">Affichage</div>
<svg style="left:0;top:0" width="1600" height="860">
<path d="M1555.5 176l7.5 7.5M1563 176l-7.5 7.5" stroke="#555" stroke-width="1.2"/>
<path d="M1475.5 206v13M1469 212.5h13" stroke="#44b044" stroke-width="3.6"/>
<path d="M1489 212h5l-2.5 3z M1556 212h5l-2.5 3z" fill="#666"/>
</svg>
<div class="a" style="left:1101px;top:233px;width:465px;height:599px;background:#fff;border:1px solid #a8a8a8"></div>
<div class="a" style="left:1549px;top:233px;width:15px;height:598px;background:#f0f0f0"></div>
<div class="a" style="left:1549px;top:251px;width:15px;height:424px;background:#c8c8c8"></div>
<svg style="left:0;top:0" width="1600" height="860">
<path d="M1552.5 245l4-4 4 4M1552.5 820l4 4 4-4" fill="none" stroke="#444" stroke-width="1.4"/>
<rect x="1109.5" y="238.8" width="8.5" height="8.5" rx="1" fill="#f0f0f0" stroke="#8a8a8a" stroke-width="1"/>
<path d="M1111.5 243.1h4.5" stroke="#3b6fc8" stroke-width="1.2"/>
<path d="M1126 242.8H1146M1207.5 242.8H1523" stroke="#dcdcdc" stroke-width="1"/>
<g transform="translate(1527,234.8)"><rect x=".5" y="2.5" width="15" height="12.5" rx="1.5" fill="#fff" stroke="#777"/><rect x="1" y="3" width="14" height="3" fill="#f0a040"/><path d="M4 1v3M12 1v3" stroke="#777"/><path d="M4 10l2 2 3.5-3.5" fill="none" stroke="#4caf50" stroke-width="1.4"/><path d="M12 9v5M9.5 11.5h5" stroke="#4caf50" stroke-width="1.3"/></g>
<rect x="1149" y="251.8" width="15.5" height="15.5" rx="1" fill="#e0141e"/>
<text x="1156.8" y="264.8" font-weight="bold" font-size="14" fill="#fff" text-anchor="middle">1</text>
<rect x="1130.5" y="274.0" width="8.5" height="8.5" rx="1" fill="#f0f0f0" stroke="#8a8a8a" stroke-width="1"/>
<path d="M1132.5 278.3h4.5M1134.75 276.0v4.6" stroke="#3b6fc8" stroke-width="1.1"/>
<rect x="1149" y="269.4" width="15.5" height="15.5" rx="1" fill="#1e96f0"/>
<text x="1156.8" y="282.4" font-weight="bold" font-size="14" fill="#fff" text-anchor="middle">2</text>
<rect x="1149" y="287.0" width="15.5" height="15.5" rx="1" fill="#6cbe1e"/>
<text x="1156.8" y="300.0" font-weight="bold" font-size="14" fill="#fff" text-anchor="middle">3</text>
<rect x="1149" y="304.6" width="15.5" height="15.5" rx="1" fill="#f5a800"/>
<text x="1156.8" y="317.6" font-weight="bold" font-size="14" fill="#fff" text-anchor="middle">4</text>
<rect x="1149" y="322.2" width="15.5" height="15.5" rx="1" fill="#8a4ae8"/>
<text x="1156.8" y="335.2" font-weight="bold" font-size="14" fill="#fff" text-anchor="middle">5</text>
<rect x="1149" y="339.8" width="15.5" height="15.5" rx="1" fill="#6e6e6e"/>
<text x="1156.8" y="352.8" font-weight="bold" font-size="14" fill="#fff" text-anchor="middle">6</text>
<rect x="1149" y="357.4" width="15.5" height="15.5" rx="1" fill="#6e6e6e"/>
<text x="1156.8" y="370.4" font-weight="bold" font-size="14" fill="#fff" text-anchor="middle">7</text>
<rect x="1149" y="375.0" width="15.5" height="15.5" rx="1" fill="#6e6e6e"/>
<text x="1156.8" y="388.0" font-weight="bold" font-size="14" fill="#fff" text-anchor="middle">8</text>
<rect x="1149" y="392.6" width="15.5" height="15.5" rx="1" fill="#6e6e6e"/>
<text x="1156.8" y="405.6" font-weight="bold" font-size="14" fill="#fff" text-anchor="middle">9</text>
<rect x="1109.5" y="414.8" width="8.5" height="8.5" rx="1" fill="#f0f0f0" stroke="#8a8a8a" stroke-width="1"/>
<path d="M1111.5 419.1h4.5" stroke="#3b6fc8" stroke-width="1.2"/>
<path d="M1126 418.8H1146M1273.5 418.8H1523" stroke="#dcdcdc" stroke-width="1"/>
<g transform="translate(1527,410.8)"><rect x=".5" y="2.5" width="15" height="12.5" rx="1.5" fill="#fff" stroke="#777"/><rect x="1" y="3" width="14" height="3" fill="#f0a040"/><path d="M4 1v3M12 1v3" stroke="#777"/><path d="M4 10l2 2 3.5-3.5" fill="none" stroke="#4caf50" stroke-width="1.4"/><path d="M12 9v5M9.5 11.5h5" stroke="#4caf50" stroke-width="1.3"/></g>
<rect x="1130.5" y="432.4" width="8.5" height="8.5" rx="1" fill="#f0f0f0" stroke="#8a8a8a" stroke-width="1"/>
<path d="M1132.5 436.7h4.5M1134.75 434.4v4.6" stroke="#3b6fc8" stroke-width="1.1"/>
<circle cx="1157" cy="435.6" r="6.8" fill="#fff" stroke="#3b86e8" stroke-width="1.6"/>
<circle cx="1157" cy="453.2" r="6.8" fill="#fff" stroke="#3b86e8" stroke-width="1.6"/>
<path d="M1157 453.2V446.4A6.8 6.8 0 0 1 1163.8 453.2z" fill="#3b86e8"/>
<rect x="1130.5" y="467.6" width="8.5" height="8.5" rx="1" fill="#f0f0f0" stroke="#8a8a8a" stroke-width="1"/>
<path d="M1132.5 471.9h4.5M1134.75 469.6v4.6" stroke="#3b6fc8" stroke-width="1.1"/>
<circle cx="1157" cy="470.8" r="6.8" fill="#fff" stroke="#3b86e8" stroke-width="1.6"/>
<path d="M1157 464.0A6.8 6.8 0 0 1 1157 477.6z" fill="#3b86e8"/>
<circle cx="1157" cy="488.4" r="6.8" fill="#fff" stroke="#3b86e8" stroke-width="1.6"/>
<path d="M1157 488.4V481.6A6.8 6.8 0 1 1 1150.2 488.4z" fill="#3b86e8"/>
<rect x="1130.5" y="502.8" width="8.5" height="8.5" rx="1" fill="#f0f0f0" stroke="#8a8a8a" stroke-width="1"/>
<path d="M1132.5 507.1h4.5M1134.75 504.8v4.6" stroke="#3b6fc8" stroke-width="1.1"/>
<circle cx="1157" cy="506.0" r="7.6" fill="#2ea44f"/><path d="M1153.5 506.0l2.5 2.5 4.5-4.5" fill="none" stroke="#fff" stroke-width="2"/>
<rect x="1109.5" y="520.4" width="8.5" height="8.5" rx="1" fill="#f0f0f0" stroke="#8a8a8a" stroke-width="1"/>
<path d="M1111.5 524.7h4.5" stroke="#3b6fc8" stroke-width="1.2"/>
<path d="M1126 524.4H1146M1237.7 524.4H1523" stroke="#dcdcdc" stroke-width="1"/>
<g transform="translate(1527,516.4)"><rect x=".5" y="2.5" width="15" height="12.5" rx="1.5" fill="#fff" stroke="#777"/><rect x="1" y="3" width="14" height="3" fill="#f0a040"/><path d="M4 1v3M12 1v3" stroke="#777"/><path d="M4 10l2 2 3.5-3.5" fill="none" stroke="#4caf50" stroke-width="1.4"/><path d="M12 9v5M9.5 11.5h5" stroke="#4caf50" stroke-width="1.3"/></g>
<rect x="1130.5" y="538.0" width="8.5" height="8.5" rx="1" fill="#f0f0f0" stroke="#8a8a8a" stroke-width="1"/>
<path d="M1132.5 542.3h4.5M1134.75 540.0v4.6" stroke="#3b6fc8" stroke-width="1.1"/>
<g stroke="#8a8a8a" stroke-width="1.2"><circle cx="1157" cy="538.4" r="2.7" fill="#d0d0d0"/><path d="M1152 546.6c0-3.4 2.2-5 5-5s5 1.6 5 5z" fill="none"/></g>
<rect x="1130.5" y="555.6" width="8.5" height="8.5" rx="1" fill="#f0f0f0" stroke="#8a8a8a" stroke-width="1"/>
<path d="M1132.5 559.9h4.5M1134.75 557.6v4.6" stroke="#3b6fc8" stroke-width="1.1"/>
<g stroke="#8a8a8a" stroke-width="1.2"><circle cx="1157" cy="556.0" r="2.7" fill="#d0d0d0"/><path d="M1152 564.2c0-3.4 2.2-5 5-5s5 1.6 5 5z" fill="none"/></g>
<rect x="1130.5" y="573.2" width="8.5" height="8.5" rx="1" fill="#f0f0f0" stroke="#8a8a8a" stroke-width="1"/>
<path d="M1132.5 577.5h4.5M1134.75 575.2v4.6" stroke="#3b6fc8" stroke-width="1.1"/>
<g stroke="#8a8a8a" stroke-width="1.2"><circle cx="1157" cy="573.6" r="2.7" fill="#d0d0d0"/><path d="M1152 581.8c0-3.4 2.2-5 5-5s5 1.6 5 5z" fill="none"/></g>
<rect x="1130.5" y="590.8" width="8.5" height="8.5" rx="1" fill="#f0f0f0" stroke="#8a8a8a" stroke-width="1"/>
<path d="M1132.5 595.1h4.5M1134.75 592.8v4.6" stroke="#3b6fc8" stroke-width="1.1"/>
<g stroke="#8a8a8a" stroke-width="1.2"><circle cx="1157" cy="591.2" r="2.7" fill="#d0d0d0"/><path d="M1152 599.4c0-3.4 2.2-5 5-5s5 1.6 5 5z" fill="none"/></g>
<rect x="1130.5" y="608.4" width="8.5" height="8.5" rx="1" fill="#f0f0f0" stroke="#8a8a8a" stroke-width="1"/>
<path d="M1132.5 612.7h4.5M1134.75 610.4v4.6" stroke="#3b6fc8" stroke-width="1.1"/>
<g stroke="#8a8a8a" stroke-width="1.2"><circle cx="1157" cy="608.8" r="2.7" fill="#d0d0d0"/><path d="M1152 617.0c0-3.4 2.2-5 5-5s5 1.6 5 5z" fill="none"/></g>
<g stroke="#8a8a8a" stroke-width="1.2"><circle cx="1157" cy="626.4" r="2.7" fill="#d0d0d0"/><path d="M1152 634.6c0-3.4 2.2-5 5-5s5 1.6 5 5z" fill="none"/></g>
<rect x="1130.5" y="643.6" width="8.5" height="8.5" rx="1" fill="#f0f0f0" stroke="#8a8a8a" stroke-width="1"/>
<path d="M1132.5 647.9h4.5M1134.75 645.6v4.6" stroke="#3b6fc8" stroke-width="1.1"/>
<g stroke="#8a8a8a" stroke-width="1.2"><circle cx="1157" cy="644.0" r="2.7" fill="#d0d0d0"/><path d="M1152 652.2c0-3.4 2.2-5 5-5s5 1.6 5 5z" fill="none"/></g>
<g stroke="#8a8a8a" stroke-width="1.2"><circle cx="1157" cy="661.6" r="2.7" fill="#d0d0d0"/><path d="M1152 669.8c0-3.4 2.2-5 5-5s5 1.6 5 5z" fill="none"/></g>
<rect x="1130.5" y="678.8" width="8.5" height="8.5" rx="1" fill="#f0f0f0" stroke="#8a8a8a" stroke-width="1"/>
<path d="M1132.5 683.1h4.5M1134.75 680.8v4.6" stroke="#3b6fc8" stroke-width="1.1"/>
<g stroke="#8a8a8a" stroke-width="1.2"><circle cx="1157" cy="679.2" r="2.7" fill="#d0d0d0"/><path d="M1152 687.4c0-3.4 2.2-5 5-5s5 1.6 5 5z" fill="none"/></g>
<rect x="1130.5" y="696.4" width="8.5" height="8.5" rx="1" fill="#f0f0f0" stroke="#8a8a8a" stroke-width="1"/>
<path d="M1132.5 700.7h4.5M1134.75 698.4v4.6" stroke="#3b6fc8" stroke-width="1.1"/>
<g stroke="#8a8a8a" stroke-width="1.2"><circle cx="1157" cy="696.8" r="2.7" fill="#d0d0d0"/><path d="M1152 705.0c0-3.4 2.2-5 5-5s5 1.6 5 5z" fill="none"/></g>
<path d="M1126 718.0H1146M1245.8 718.0H1523" stroke="#dcdcdc" stroke-width="1"/>
<g transform="translate(1527,710.0)"><path d="M9.5 .5l6 .3.3 6-9 9c-.8.8-2 .8-2.8 0L.6 12.4c-.8-.8-.8-2 0-2.8z" fill="#3b7dd8"/><path d="M4 11l6-6" stroke="#e8f0fa" stroke-width="1.2"/><path d="M3.3 9.3l6.5-6.5 3.4.2.2 3.4-6.5 6.5z" fill="none" stroke="#cfe0f5" stroke-width=".8"/><circle cx="12.5" cy="3.5" r="1.1" fill="#fff"/></g>
<rect x="1109.5" y="731.6" width="8.5" height="8.5" rx="1" fill="#f0f0f0" stroke="#8a8a8a" stroke-width="1"/>
<path d="M1111.5 735.9h4.5M1113.75 733.6v4.6" stroke="#3b6fc8" stroke-width="1.1"/>
<path d="M1126 735.6H1146M1194.6 735.6H1523" stroke="#dcdcdc" stroke-width="1"/>
<g transform="translate(1527,727.6)"><path d="M9.5 .5l6 .3.3 6-9 9c-.8.8-2 .8-2.8 0L.6 12.4c-.8-.8-.8-2 0-2.8z" fill="#3b7dd8"/><path d="M4 11l6-6" stroke="#e8f0fa" stroke-width="1.2"/><path d="M3.3 9.3l6.5-6.5 3.4.2.2 3.4-6.5 6.5z" fill="none" stroke="#cfe0f5" stroke-width=".8"/><circle cx="12.5" cy="3.5" r="1.1" fill="#fff"/></g>
<rect x="1109.5" y="749.2" width="8.5" height="8.5" rx="1" fill="#f0f0f0" stroke="#8a8a8a" stroke-width="1"/>
<path d="M1111.5 753.5h4.5M1113.75 751.2v4.6" stroke="#3b6fc8" stroke-width="1.1"/>
<path d="M1126 753.2H1146M1189.0 753.2H1523" stroke="#dcdcdc" stroke-width="1"/>
<g transform="translate(1527,745.2)"><path d="M9.5 .5l6 .3.3 6-9 9c-.8.8-2 .8-2.8 0L.6 12.4c-.8-.8-.8-2 0-2.8z" fill="#3b7dd8"/><path d="M4 11l6-6" stroke="#e8f0fa" stroke-width="1.2"/><path d="M3.3 9.3l6.5-6.5 3.4.2.2 3.4-6.5 6.5z" fill="none" stroke="#cfe0f5" stroke-width=".8"/><circle cx="12.5" cy="3.5" r="1.1" fill="#fff"/></g>
<path d="M1126 770.8H1146M1209.3 770.8H1523" stroke="#dcdcdc" stroke-width="1"/>
<g transform="translate(1527,762.8)"><path d="M9.5 .5l6 .3.3 6-9 9c-.8.8-2 .8-2.8 0L.6 12.4c-.8-.8-.8-2 0-2.8z" fill="#3b7dd8"/><path d="M4 11l6-6" stroke="#e8f0fa" stroke-width="1.2"/><path d="M3.3 9.3l6.5-6.5 3.4.2.2 3.4-6.5 6.5z" fill="none" stroke="#cfe0f5" stroke-width=".8"/><circle cx="12.5" cy="3.5" r="1.1" fill="#fff"/></g>
<rect x="1109.5" y="784.4" width="8.5" height="8.5" rx="1" fill="#f0f0f0" stroke="#8a8a8a" stroke-width="1"/>
<path d="M1111.5 788.7h4.5M1113.75 786.4v4.6" stroke="#3b6fc8" stroke-width="1.1"/>
<path d="M1126 788.4H1146M1224.8 788.4H1523" stroke="#dcdcdc" stroke-width="1"/>
<g transform="translate(1527,780.4)"><path d="M9.5 .5l6 .3.3 6-9 9c-.8.8-2 .8-2.8 0L.6 12.4c-.8-.8-.8-2 0-2.8z" fill="#3b7dd8"/><path d="M4 11l6-6" stroke="#e8f0fa" stroke-width="1.2"/><path d="M3.3 9.3l6.5-6.5 3.4.2.2 3.4-6.5 6.5z" fill="none" stroke="#cfe0f5" stroke-width=".8"/><circle cx="12.5" cy="3.5" r="1.1" fill="#fff"/></g>
<rect x="1109.5" y="802.0" width="8.5" height="8.5" rx="1" fill="#f0f0f0" stroke="#8a8a8a" stroke-width="1"/>
<path d="M1111.5 806.3h4.5M1113.75 804.0v4.6" stroke="#3b6fc8" stroke-width="1.1"/>
<path d="M1126 806.0H1146M1214.3 806.0H1523" stroke="#dcdcdc" stroke-width="1"/>
<g transform="translate(1527,798.0)"><path d="M9.5 .5l6 .3.3 6-9 9c-.8.8-2 .8-2.8 0L.6 12.4c-.8-.8-.8-2 0-2.8z" fill="#3b7dd8"/><path d="M4 11l6-6" stroke="#e8f0fa" stroke-width="1.2"/><path d="M3.3 9.3l6.5-6.5 3.4.2.2 3.4-6.5 6.5z" fill="none" stroke="#cfe0f5" stroke-width=".8"/><circle cx="12.5" cy="3.5" r="1.1" fill="#fff"/></g>
<rect x="1109.5" y="819.6" width="8.5" height="8.5" rx="1" fill="#f0f0f0" stroke="#8a8a8a" stroke-width="1"/>
<path d="M1111.5 823.9h4.5M1113.75 821.6v4.6" stroke="#3b6fc8" stroke-width="1.1"/>
<path d="M1126 823.6H1146M1214.9 823.6H1523" stroke="#dcdcdc" stroke-width="1"/>
<g transform="translate(1527,815.6)"><rect x="0" y="0" width="9" height="9" rx="1" fill="#d63b3b"/><circle cx="10.5" cy="11" r="5.5" fill="#5cb85c" stroke="#fff" stroke-width="1"/><path d="M8 11l2 2 3-3" fill="none" stroke="#fff" stroke-width="1.3"/></g>
<g font-family="Liberation Sans" font-size="10.4">
<text x="1148.5" y="246.7" font-weight="bold" font-size="11.1" fill="#1a6ad8">Priorité (1)</text>
<text transform="translate(1169,264.5) scale(.9,1)" font-size="11.5" fill="#222">Priorité 1</text>
<text transform="translate(1169,282.1) scale(.9,1)" font-size="11.5" fill="#222">Priorité 2 (1)</text>
<text transform="translate(1169,299.7) scale(.9,1)" font-size="11.5" fill="#222">Priorité 3</text>
<text transform="translate(1169,317.3) scale(.9,1)" font-size="11.5" fill="#222">Priorité 4</text>
<text transform="translate(1169,334.9) scale(.9,1)" font-size="11.5" fill="#222">Priorité 5</text>
<text transform="translate(1169,352.5) scale(.9,1)" font-size="11.5" fill="#222">Priorité 6</text>
<text transform="translate(1169,370.1) scale(.9,1)" font-size="11.5" fill="#222">Priorité 7</text>
<text transform="translate(1169,387.7) scale(.9,1)" font-size="11.5" fill="#222">Priorité 8</text>
<text transform="translate(1169,405.3) scale(.9,1)" font-size="11.5" fill="#222">Prioriété 9</text>
<text x="1148.5" y="422.7" font-weight="bold" font-size="11.1" fill="#1a6ad8">Tâche achevée (%) (11)</text>
<text transform="translate(1169,440.5) scale(.9,1)" font-size="11.5" fill="#222">Début de la tâche (6)</text>
<text transform="translate(1169,458.1) scale(.9,1)" font-size="11.5" fill="#222">Réalisée à 25 %</text>
<text transform="translate(1169,475.7) scale(.9,1)" font-size="11.5" fill="#222">Réalisée à 50 % (3)</text>
<text transform="translate(1169,493.3) scale(.9,1)" font-size="11.5" fill="#222">A présenter en réunion</text>
<text transform="translate(1169,510.9) scale(.9,1)" font-size="11.5" fill="#222">Tâche achevée (2)</text>
<text x="1148.5" y="528.3" font-weight="bold" font-size="11.1" fill="#1a6ad8">Ressources (12)</text>
<text transform="translate(1169,546.1) scale(.9,1)" font-size="11.5" fill="#222">Alexandre (6)</text>
<text transform="translate(1169,563.7) scale(.9,1)" font-size="11.5" fill="#222">Anne (1)</text>
<text transform="translate(1169,581.3) scale(.9,1)" font-size="11.5" fill="#222">Aurore (1)</text>
<text transform="translate(1169,598.9) scale(.9,1)" font-size="11.5" fill="#222">Clément (1)</text>
<text transform="translate(1169,616.5) scale(.9,1)" font-size="11.5" fill="#222">Cyrille (2)</text>
<text transform="translate(1169,634.1) scale(.9,1)" font-size="11.5" fill="#222">Jean Pierre</text>
<text transform="translate(1169,651.7) scale(.9,1)" font-size="11.5" fill="#222">Marina (3)</text>
<text transform="translate(1169,669.3) scale(.9,1)" font-size="11.5" fill="#222">Martine</text>
<text transform="translate(1169,686.9) scale(.9,1)" font-size="11.5" fill="#222">Nathalie (2)</text>
<text transform="translate(1169,704.5) scale(.9,1)" font-size="11.5" fill="#222">L'eau à la Bouche (henri.dubois@proactiftech.fr) (1)</text>
<text x="1148.5" y="721.9" font-weight="bold" font-size="11.1" fill="#1a6ad8">Balises générales</text>
<text x="1148.5" y="739.5" font-weight="bold" font-size="11.1" fill="#1a6ad8">Session</text>
<text x="1148.5" y="757.1" font-weight="bold" font-size="11.1" fill="#1a6ad8">J Form</text>
<text x="1148.5" y="774.7" font-weight="bold" font-size="11.1" fill="#1a6ad8">Catégories</text>
<text x="1148.5" y="792.3" font-weight="bold" font-size="11.1" fill="#1a6ad8">Processus (1)</text>
<text x="1148.5" y="809.9" font-weight="bold" font-size="11.1" fill="#1a6ad8">Service (17)</text>
<text x="1148.5" y="827.5" font-weight="bold" font-size="11.1" fill="#1a6ad8">Émoticônes</text>
</g>
<rect x="1146.5" y="516.5" width="88" height="15" fill="none" stroke="#8a5a20" stroke-width=".8" stroke-dasharray="1.5 1"/>
</svg>

<div class="a" style="left:1569px;top:163px;width:31px;height:673px;background:#f0f0f0"></div>
<div class="a" style="left:1598.5px;top:34px;width:1.5px;height:802px;background:#c4c4c4"></div>
<svg style="left:0;top:0" width="1600" height="860">
<path d="M1569.5 178.5H1589l8 8V208.3H1569.5z" fill="#e6e6e6" stroke="#cfcfcf" stroke-width="1"/>
<path d="M1589 178.5l8 8h-8z" fill="#fff"/>
<rect x="1569" y="208.3" width="28" height="30.3" fill="#f4f4f4"/>
<path d="M1589 208.8h8v8z" fill="#d8d8d8"/>
<path d="M1569.5 239.1H1589l8 8V268.9H1569.5z" fill="#e6e6e6" stroke="#cfcfcf" stroke-width="1"/>
<path d="M1589 239.1l8 8h-8z" fill="#fff"/>
<path d="M1569.5 269.4H1589l8 8V299.2H1569.5z" fill="#e6e6e6" stroke="#cfcfcf" stroke-width="1"/>
<path d="M1589 269.4l8 8h-8z" fill="#fff"/>
<path d="M1569.5 299.7H1589l8 8V329.5H1569.5z" fill="#e6e6e6" stroke="#cfcfcf" stroke-width="1"/>
<path d="M1589 299.7l8 8h-8z" fill="#fff"/>
<path d="M1569.5 330.0H1589l8 8V359.8H1569.5z" fill="#e6e6e6" stroke="#cfcfcf" stroke-width="1"/>
<path d="M1589 330.0l8 8h-8z" fill="#fff"/>
<path d="M1569.5 360.3H1589l8 8V390.1H1569.5z" fill="#e6e6e6" stroke="#cfcfcf" stroke-width="1"/>
<path d="M1589 360.3l8 8h-8z" fill="#fff"/>
<path d="M1569.5 390.6H1589l8 8V420.4H1569.5z" fill="#e6e6e6" stroke="#cfcfcf" stroke-width="1"/>
<path d="M1589 390.6l8 8h-8z" fill="#fff"/>
<path d="M1569.5 420.9H1589l8 8V450.7H1569.5z" fill="#e6e6e6" stroke="#cfcfcf" stroke-width="1"/>
<path d="M1589 420.9l8 8h-8z" fill="#fff"/>
<path d="M1569.5 451.2H1589l8 8V481.0H1569.5z" fill="#e6e6e6" stroke="#cfcfcf" stroke-width="1"/>
<path d="M1589 451.2l8 8h-8z" fill="#fff"/>
<path d="M1569.5 481.5H1589l8 8V511.3H1569.5z" fill="#e6e6e6" stroke="#cfcfcf" stroke-width="1"/>
<path d="M1589 481.5l8 8h-8z" fill="#fff"/>
<path d="M1569.5 511.8H1589l8 8V541.6H1569.5z" fill="#e6e6e6" stroke="#cfcfcf" stroke-width="1"/>
<path d="M1589 511.8l8 8h-8z" fill="#fff"/>
<g transform="translate(1575,185.0)"><path d="M.5 2.5h6l1.5 1.5h9.5v12H.5z" fill="#fff" stroke="#333" stroke-width="1"/><rect x="1" y="6" width="16" height="10" fill="#3a5cc8"/><path d="M5 8v6l4-3zM13 8v6l-4-3z" fill="#fff"/></g>
<g transform="translate(1575,214.3)"><rect x="0" y="0" width="10" height="10" rx="1.5" fill="#d63b3b"/><circle cx="11" cy="12" r="6.3" fill="#5cb85c" stroke="#fff" stroke-width="1"/><path d="M8 12l2.3 2.3 3.7-3.7" fill="none" stroke="#fff" stroke-width="1.5"/></g>
<g transform="translate(1576,245.6)"><rect x=".5" y="2.5" width="15" height="13" rx="1.5" fill="#fff" stroke="#666"/><rect x="1" y="3" width="14" height="3" fill="#f0a040"/><path d="M4 1v3M12 1v3" stroke="#666"/><path d="M4 10l2 2 3.5-3.5" fill="none" stroke="#4caf50" stroke-width="1.4"/><path d="M12.5 9v6M9.5 12h6" stroke="#4caf50" stroke-width="1.3"/></g>
<g fill="none" stroke="#888" stroke-width="1.2"><circle cx="1584" cy="278.9" r="2.8"/><path d="M1577.5 290.9c0-6 3-10 6.5-10s6.5 4 6.5 10z"/></g>
<g fill="none" stroke="#888" stroke-width="1.1"><rect x="1576" y="312.2" width="6" height="3.5" rx="1.5" fill="#fff"/><path d="M1582 313.9h2M1584 310.2v8M1584 310.2h2M1584 314.7h2"/><rect x="1586" y="308.7" width="5" height="3" rx="1.5"/><rect x="1586" y="313.2" width="5" height="3" rx="1.5"/></g><path d="M1589 317.2v5M1586.5 319.7h5" stroke="#4caf50" stroke-width="1.2"/>
<g transform="translate(1576,336.5)"><path d="M3 3h10v12H3z" fill="#e8e8e8" stroke="#888"/><rect x="0" y="0" width="12" height="12" fill="#5a9ee8"/><path d="M1 11l4-5 4 5z" fill="#888"/><circle cx="9" cy="3" r="1.3" fill="#e0a030"/><path d="M13 11v5M10.5 13.5h5" stroke="#4caf50" stroke-width="1.3"/></g>
<g fill="none" stroke="#777" stroke-width="1.6"><circle cx="1582.5" cy="372.8" r="5"/><path d="M1586 376.3l4 4" stroke-width="2.2"/></g>
<g transform="translate(1576,397.1)"><rect x="0" y="0" width="16" height="16" rx="2" fill="#3a5cc8"/><path d="M2.5 6V2.5H6M10 2.5h3.5V6M13.5 10v3.5H10M6 13.5H2.5V10" fill="none" stroke="#fff" stroke-width="1.2"/><path d="M5.5 5v6l2.5-2zM10.5 5v6L8 9z" fill="#fff"/></g>
<g transform="translate(1576,427.4)"><rect x=".5" y=".5" width="9" height="8" rx="1" fill="#f4f4f4" stroke="#888"/><rect x="3.5" y="5.5" width="12" height="9" rx="1.5" fill="#fff" stroke="#3b7dd8" stroke-width="1.2"/><path d="M6.5 10h6" stroke="#3b7dd8" stroke-width="1.5"/></g>
<g transform="translate(1575,457.7)"><path d="M8 3.5h9v9H8z" fill="#fff" stroke="#1e78d8"/><path d="M9 5l4 3 4-3" fill="none" stroke="#1e78d8"/><path d="M0 2.5l10-2v15l-10-2z" fill="#1e78d8"/><circle cx="5" cy="8" r="2.3" fill="none" stroke="#fff" stroke-width="1.3"/></g>
<g fill="none" stroke="#888" stroke-width="1"><circle cx="1584" cy="496.0" r="7" fill="#a8a8a8"/><ellipse cx="1584" cy="496.0" rx="3" ry="7" stroke="#eee"/><path d="M1577 496.0h14M1578 492.5h12M1578 499.5h12" stroke="#eee"/></g>
<g transform="translate(1575,518.3)"><path d="M9 3h8v11H9z" fill="#fff" stroke="#5a9a3a" stroke-dasharray="1 1"/><path d="M0 2.5l10-2v15l-10-2z" fill="#3f8f2f"/><path d="M3 5l4 6M7 5l-4 6" stroke="#fff" stroke-width="1.4"/></g>
</svg>
<div class="a" style="left:1px;top:813px;width:1095px;height:23px;background:#e5e5e5"></div>
<div class="a" style="left:1px;top:835px;width:1095px;height:1px;background:#d4d4d4"></div>
<svg style="left:0;top:0" width="1600" height="860">
<path d="M14 813.5h273.5v19.5H34z" fill="#fcfcfc" stroke="#d0d0d0" stroke-width="1"/>
<path d="M9 816.5l-4 4 4 4z" fill="none" stroke="#999" stroke-width="1"/>
<path d="M1081 816.5l4 4-4 4z" fill="none" stroke="#999" stroke-width="1"/>
<path d="M43 815.5h7.5l3 3v12.5H43z" fill="#3d5cc4"/>
<path d="M52.5 815.5l3 3h-3z" fill="#fff"/>
<path d="M45 821v8l3-3.5zM52 821v8l-3-3.5z" fill="#ddd"/>
<path d="M259.5 818.5v6h6M261.5 820.5l4 4M263 824.5h2.5V822" fill="none" stroke="#888" stroke-width=".9"/>
<path d="M276.5 819l7 7M283.5 819l-7 7" stroke="#555" stroke-width="1.2"/>
</svg>
<div class="a" style="left:67px;top:816px;font-size:11px;line-height:14px;color:#444;font-weight:bold;letter-spacing:.15px">Organiser Journ... de Production*</div>
<div class="a" style="left:0;top:836px;width:1600px;height:24px;background:#f0f0f0"></div>
<div class="a" style="left:0;top:859px;width:1600px;height:1px;background:#a0a0a0"></div>
<div class="a" style="left:0;top:836px;width:1600px;height:1px;background:#dadada"></div>
<svg style="left:0;top:0" width="1600" height="860">
<g fill="#777">
<path d="M1090 841h15l-5.5 6v8h-4v-8z"/>
<path d="M1112 841h15l-5.5 6v8h-4v-8z"/><path d="M1131 847h4.5l-2.25 2.5z"/>
<path d="M1143 841h15l-5.5 6v8h-4v-8z"/><path d="M1162.5 847h4.5l-2.25 2.5z"/>
<path d="M1203 847h4.5l-2.25 2.5z"/>
<path d="M1590 847h4.5l-2.25 2.5z"/>
</g>
<path d="M1099 850l5 5M1104 850l-5 5" stroke="#777" stroke-width="1.4"/>
<path d="M1154 845l-3 5h3l-2 5" stroke="#f0f0f0" stroke-width="1.2" fill="none"/>
<circle cx="1190.5" cy="848.5" r="6.3" fill="none" stroke="#777" stroke-width="1.5"/>
<path d="M1190.5 845v7M1187 848.5h7" stroke="#777" stroke-width="1.6"/>
<g fill="none" stroke="#777" stroke-width="1.2">
<rect x="1237.5" y="840.5" width="15" height="15" rx="2"/>
<path d="M1240 844h8M1240 847h5M1240 850h8M1240 853h5"/>
<rect x="1261.5" y="840.5" width="15" height="15" rx="2"/>
<rect x="1286.5" y="840.5" width="15" height="15" rx="2"/>
<rect x="1311.5" y="840.5" width="15" height="15" rx="2"/>
<rect x="1337.5" y="840.5" width="15" height="15" rx="1"/>
<path d="M1340 843h9M1340 846h9M1340 849h9" />
</g>
<rect x="1213.5" y="840.5" width="15" height="15" rx="2" fill="none" stroke="#ccc" stroke-width="1.2"/>
<path d="M1217 844l8 8M1225 844l-8 8" stroke="#ddd" stroke-width="1"/>
<rect x="1262" y="841" width="14" height="4" fill="#777"/>
<text x="1269" y="854" font-family="Liberation Sans" font-size="7" fill="#777" text-anchor="middle">24</text>
<rect x="1289" y="843" width="6" height="5" fill="#777"/><circle cx="1297" cy="851" r="3" fill="none" stroke="#777" stroke-width="1.3"/>
<path d="M1316 849l5-5h3v3l-5 5z" fill="none" stroke="#777" stroke-width="1.3"/>
<path d="M1411 848.5h6M1524 848.5h8M1528 844.5v8" stroke="#888" stroke-width="1"/>
<path d="M1428 848.5h85" stroke="#c8c8c8" stroke-width="1"/>
<rect x="1470.5" y="841.5" width="5" height="14" fill="#f4f4f4" stroke="#aaa" stroke-width="1"/>
<g fill="none" stroke="#777" stroke-width="1.2"><rect x="1542.5" y="841.5" width="13" height="13" rx="1"/><path d="M1545 844l2 2M1553 844l-2 2M1545 852l2-2M1553 852l-2-2"/></g>
<path d="M1572 841.5h13v13h-13z" fill="#fff" stroke="#777" stroke-width="1.2"/><rect x="1572" y="841.5" width="8" height="13" fill="#777"/>
</svg>
<div class="a" style="left:1363px;top:841.5px;font-size:11px;line-height:14px;color:#555">125 %</div>
<!-- WINBORDER --><div class="a" style="left:0;top:34px;width:1px;height:826px;background:#959595"></div>
</body></html>
